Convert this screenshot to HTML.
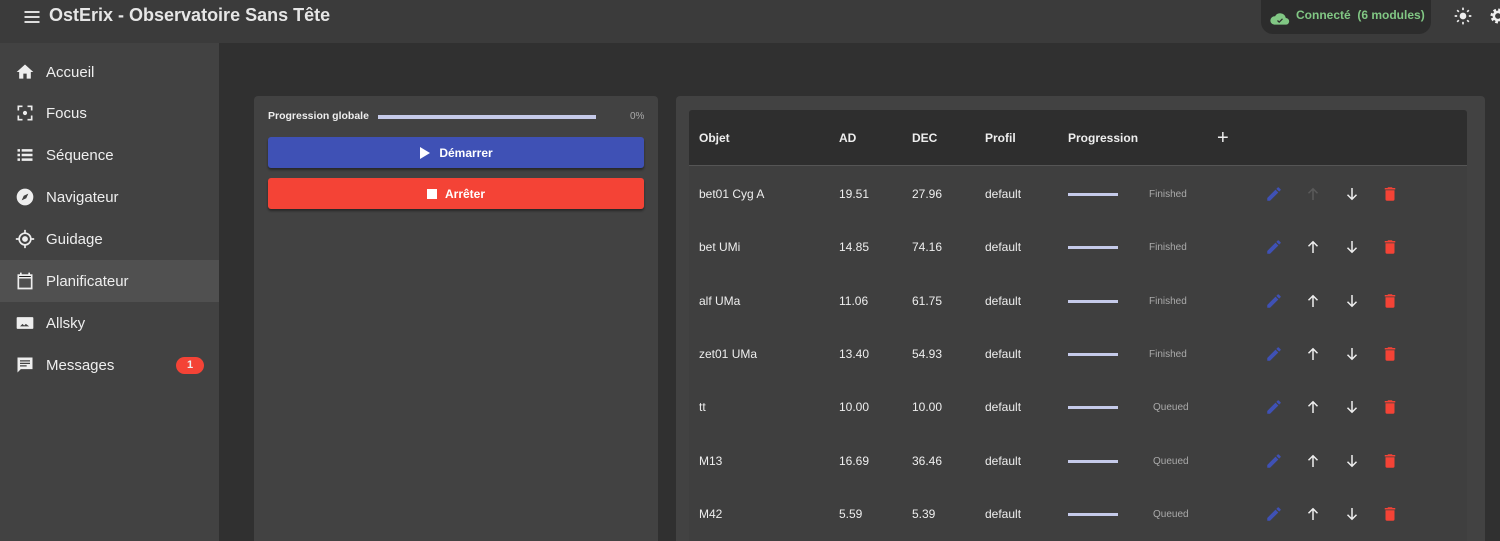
<!DOCTYPE html>
<html><head><meta charset="utf-8"><style>
*{margin:0;padding:0;box-sizing:border-box}
html,body{width:1500px;height:541px;overflow:hidden}
body{background:#303030;font-family:"Liberation Sans",sans-serif;color:#fff;position:relative}
.hdr{position:absolute;left:0;top:0;width:1500px;height:43px;background:#3b3b3b}
.side{position:absolute;left:0;top:43px;width:219px;height:498px;background:#424242}
.nav{position:absolute;left:0;width:219px;height:42px;display:flex;align-items:center;font-size:15px;color:#eee}
.nav svg{position:absolute;left:15px;width:20px;height:20px}
.nav span{position:absolute;left:46px}
.card{position:absolute;background:#424242;border-radius:4px}
.btn{position:absolute;left:14px;width:376px;height:31px;border-radius:3px;font-size:12px;font-weight:bold;display:flex;align-items:center;justify-content:center;box-shadow:0 2px 2px rgba(0,0,0,.4)}
.t{position:absolute;font-size:12px;color:#eee}
.th{font-weight:bold}
.bar{position:absolute;height:3px;background:#c5cae9;width:50px}
.st{position:absolute;font-size:10px;color:#aaa}
</style></head><body>
<div class="hdr">
<svg style="position:absolute;left:22px;top:7px" width="20" height="20" viewBox="0 0 24 24"><path d="M3 6h18M3 12h18M3 18h18" stroke="#ddd" stroke-width="2.4"/></svg>
<div style="position:absolute;left:49px;top:5px;font-size:18px;font-weight:bold;color:#e6e6e6">OstErix - Observatoire Sans Tête</div>
<div style="position:absolute;left:1261px;top:0;width:170px;height:34px;background:#2c2c2c;border-radius:0 0 12px 12px"></div>
<svg style="position:absolute;left:1270px;top:10px" width="20" height="16" viewBox="0 0 24 18"><path d="M5 17h14a4 4 0 0 0 0-8 7 7 0 0 0-13-2A5 5 0 0 0 5 17z" fill="#81c784"/><path d="M9 12l2 2 4-4" stroke="#2c2c2c" stroke-width="1.5" fill="none"/></svg>
<div style="position:absolute;left:1296px;top:8px;font-size:12px;font-weight:bold;color:#81c784">Connecté &nbsp;(6 modules)</div>
<svg style="position:absolute;left:1453px;top:6px" width="20" height="20" viewBox="0 0 24 24"><circle cx="12" cy="12" r="4" fill="#eee"/><path d="M12 2v3M12 19v3M2 12h3M19 12h3M5 5l2 2M17 17l2 2M5 19l2-2M17 7l2-2" stroke="#eee" stroke-width="2"/></svg>
<svg style="position:absolute;left:1488px;top:6px" width="20" height="20" viewBox="0 0 24 24"><circle cx="12" cy="12" r="7" fill="none" stroke="#eee" stroke-width="4" stroke-dasharray="3 2.5"/><circle cx="12" cy="12" r="5" fill="none" stroke="#eee" stroke-width="3"/></svg>
</div>
<div class="side">
<div class="nav" style="top:8px"><svg viewBox="0 0 24 24"><path d="M10 20v-6h4v6h5v-8h3L12 3 2 12h3v8z" fill="#eee"/></svg><span>Accueil</span></div>
<div class="nav" style="top:49px"><svg viewBox="0 0 24 24"><path d="M4 9V4h5M15 4h5v5M20 15v5h-5M9 20H4v-5" stroke="#eee" stroke-width="2" fill="none"/><circle cx="12" cy="12" r="2.5" fill="#eee"/></svg><span>Focus</span></div>
<div class="nav" style="top:91px"><svg viewBox="0 0 24 24"><path d="M3 5h3v3H3zM8 5h13v3H8zM3 10.5h3v3H3zM8 10.5h13v3H8zM3 16h3v3H3zM8 16h13v3H8z" fill="#eee"/></svg><span>Séquence</span></div>
<div class="nav" style="top:133px"><svg viewBox="0 0 24 24"><circle cx="12" cy="12" r="10" fill="#eee"/><path d="M16 8l-2.5 5.5L8 16l2.5-5.5z" fill="#424242"/></svg><span>Navigateur</span></div>
<div class="nav" style="top:175px"><svg viewBox="0 0 24 24"><circle cx="12" cy="12" r="7" stroke="#eee" stroke-width="2" fill="none"/><circle cx="12" cy="12" r="3.5" fill="#eee"/><path d="M12 1v4M12 19v4M1 12h4M19 12h4" stroke="#eee" stroke-width="2"/></svg><span>Guidage</span></div>
<div class="nav" style="top:217px;background:#505050"><svg viewBox="0 0 24 24"><path d="M4 5h16v16H4z" stroke="#eee" stroke-width="2" fill="none"/><path d="M4 5h16v3H4zM7 2v4M17 2v4" stroke="#eee" stroke-width="2"/></svg><span>Planificateur</span></div>
<div class="nav" style="top:259px"><svg viewBox="0 0 24 24"><rect x="2" y="5" width="20" height="14" rx="1" fill="#eee"/><path d="M6 16l3-3 2 2 2-2 4 3z" fill="#424242"/></svg><span>Allsky</span></div>
<div class="nav" style="top:301px"><svg viewBox="0 0 24 24"><path d="M3 3h18v14H7l-4 4z" fill="#eee"/><path d="M6 7h12M6 10h12M6 13h8" stroke="#424242" stroke-width="1.5"/></svg><span>Messages</span>
<div style="position:absolute;left:176px;top:13px;width:28px;height:17px;border-radius:9px;background:#f44336;font-size:11px;font-weight:bold;text-align:center;line-height:17px">1</div></div>
</div>
<div class="card" style="left:254px;top:96px;width:404px;height:460px">
<div class="t th" style="left:14px;top:14px;font-size:10.5px">Progression globale</div>
<div style="position:absolute;left:124px;top:19px;width:218px;height:4px;background:#c5cae9"></div>
<div class="st" style="left:376px;top:15px;font-size:10px">0%</div>
<div class="btn" style="top:41px;background:#3f51b5"><svg width="12" height="12" viewBox="0 0 10 12" style="margin-right:8px"><path d="M0 0l10 6-10 6z" fill="#fff"/></svg>Démarrer</div>
<div class="btn" style="top:82px;background:#f44336"><span style="width:10px;height:10px;background:#fff;margin-right:8px"></span>Arrêter</div>
</div>
<div class="card" style="left:676px;top:96px;width:809px;height:460px">
<div style="position:absolute;left:13px;top:14px;width:778px;height:440px;background:#3f3f3f;border-radius:3px"></div>
<div style="position:absolute;left:13px;top:14px;width:778px;height:56px;background:#2e2e2e;border-bottom:1px solid #555;border-radius:3px 3px 0 0"></div>
</div>
<div class="t th" style="left:699px;top:131px">Objet</div>
<div class="t th" style="left:839px;top:131px">AD</div>
<div class="t th" style="left:912px;top:131px">DEC</div>
<div class="t th" style="left:985px;top:131px">Profil</div>
<div class="t th" style="left:1068px;top:131px">Progression</div>
<div style="position:absolute;left:1217px;top:127px;font-size:20px;color:#eee">+</div>

<div id="rows"></div>
<script>
var d=[["bet01 Cyg A","19.51","27.96","Finished"],["bet UMi","14.85","74.16","Finished"],["alf UMa","11.06","61.75","Finished"],["zet01 UMa","13.40","54.93","Finished"],["tt","10.00","10.00","Queued"],["M13","16.69","36.46","Queued"],["M42","5.59","5.39","Queued"]];
var h="";
d.forEach(function(r,i){var y=194+i*53.3;
h+='<div class="t" style="left:699px;top:'+(y-7)+'px">'+r[0]+'</div><div class="t" style="left:839px;top:'+(y-7)+'px">'+r[1]+'</div><div class="t" style="left:912px;top:'+(y-7)+'px">'+r[2]+'</div><div class="t" style="left:985px;top:'+(y-7)+'px">default</div>';
h+='<div class="bar" style="left:1068px;top:'+(y-1)+'px"></div><div class="st" style="left:'+(r[3]=="Finished"?1149:1153)+'px;top:'+(y-5)+'px">'+r[3]+'</div>';
h+='<svg style="position:absolute;left:1265px;top:'+(y-9)+'px" width="18" height="18" viewBox="0 0 24 24"><path d="M3 17.25V21h3.75L17.8 9.94l-3.75-3.75zM20.7 7.04a1 1 0 0 0 0-1.41l-2.34-2.34a1 1 0 0 0-1.41 0l-1.830 1.83 3.75 3.75z" fill="#3f51b5"/></svg>';
h+='<svg style="position:absolute;left:1304px;top:'+(y-9)+'px" width="18" height="18" viewBox="0 0 24 24"><path d="M12 20V5M6 11l6-6 6 6" stroke="'+(i==0?"#5a5a5a":"#eee")+'" stroke-width="2" fill="none"/></svg>';
h+='<svg style="position:absolute;left:1343px;top:'+(y-9)+'px" width="18" height="18" viewBox="0 0 24 24"><path d="M12 4v15M6 13l6 6 6-6" stroke="#eee" stroke-width="2" fill="none"/></svg>';
h+='<svg style="position:absolute;left:1381px;top:'+(y-9)+'px" width="18" height="18" viewBox="0 0 24 24"><path d="M6 19a2 2 0 0 0 2 2h8a2 2 0 0 0 2-2V7H6zM19 4h-3.5l-1-1h-5l-1 1H5v2h14z" fill="#f44336"/></svg>';});
document.getElementById("rows").innerHTML=h;
</script>
</body></html>
